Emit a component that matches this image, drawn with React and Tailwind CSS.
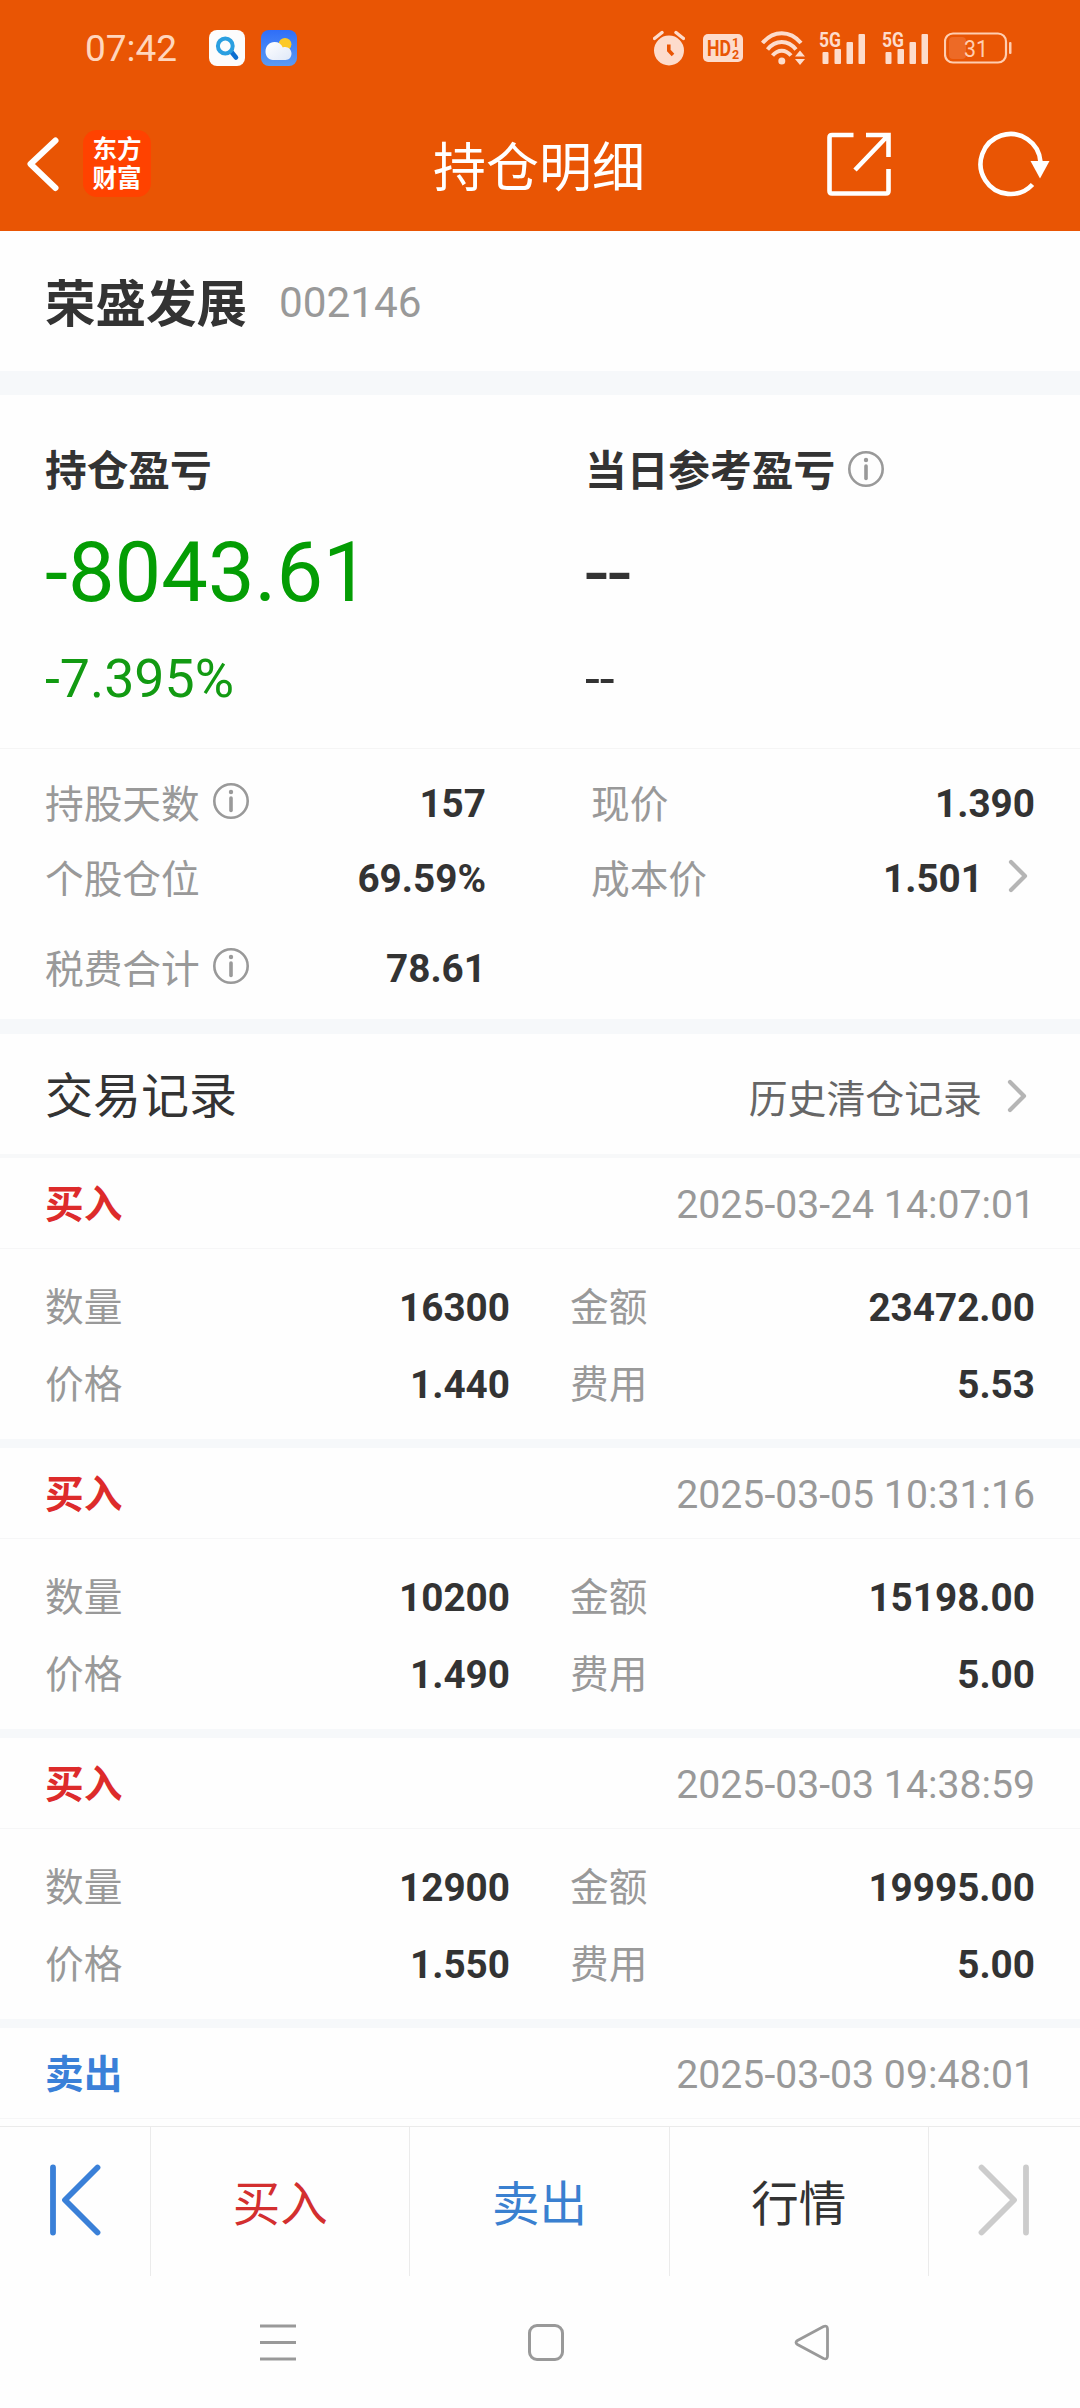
import React from "react";

const trades = [
  { side: "买入", time: "2025-03-24 14:07:01", count: "16300", amount: "23472.00", price: "1.440", fee: "5.53" },
  { side: "买入", time: "2025-03-05 10:31:16", count: "10200", amount: "15198.00", price: "1.490", fee: "5.00" },
  { side: "买入", time: "2025-03-03 14:38:59", count: "12900", amount: "19995.00", price: "1.550", fee: "5.00" },
  { side: "卖出", time: "2025-03-03 09:48:01" },
];

const InfoIcon = ({ className }) => (
  <svg className={className} width="36" height="36" viewBox="0 0 36 36" fill="none">
    <circle cx="18" cy="18" r="16.7" stroke="#999" strokeWidth="2.6" />
    <circle cx="18" cy="9" r="2.2" fill="#999" />
    <path d="M18 15V27.5" stroke="#999" strokeWidth="3.6" strokeLinecap="round" />
  </svg>
);

const Chevron = ({ className }) => (
  <svg className={className} width="20" height="34" viewBox="0 0 20 34" fill="none">
    <path d="M3 3L17 17L3 31" stroke="#b5b5b5" strokeWidth="4.2" strokeLinecap="round" strokeLinejoin="round" />
  </svg>
);

// Signal strength bars with the network type above them
const Signal = ({ className }) => (
  <svg className={className} width="46" height="46" viewBox="0 -6 46 46" fill="#fddccc">
    <text x="0" y="15.500" fontSize="21" fontWeight="700" fontFamily="Roboto, sans-serif" textLength="22" lengthAdjust="spacingAndGlyphs">5G</text>
    <rect x="3.5" y="21" width="6" height="12" rx="1" />
    <rect x="15.5" y="18" width="6.5" height="15" rx="1" />
    <rect x="27.5" y="11" width="6.5" height="22" rx="1" />
    <rect x="39.5" y="3" width="6.5" height="30" rx="1" />
  </svg>
);

const StatusBar = () => (
  <div className="flex h-[96px] items-center pl-[85px] pr-[68px]">
    <span className="w-[124px] pt-[1px] text-[37px] leading-[40px] text-[#ffd6bd]">07:42</span>
    <svg width="36" height="36" viewBox="0 0 36 36" fill="none">
      <rect width="36" height="36" rx="8" fill="#fcfcfc" />
      <path d="M22.5 22L27 27.5" stroke="#0d6fd0" strokeWidth="4.6" strokeLinecap="round" />
      <circle cx="16.3" cy="16" r="7.4" stroke="#2a9fe0" strokeWidth="4" />
    </svg>
    <svg className="ml-[16px]" width="36" height="36" viewBox="0 0 36 36">
      <defs>
        <linearGradient id="sky" x1="0" y1="0" x2="0" y2="1">
          <stop offset="0" stopColor="#2f6ef8" />
          <stop offset="1" stopColor="#5c9bf2" />
        </linearGradient>
        <linearGradient id="cloud" x1="0" y1="0" x2="1" y2="1">
          <stop offset="0" stopColor="#ffffff" />
          <stop offset="1" stopColor="#dfe8f8" />
        </linearGradient>
      </defs>
      <rect width="36" height="36" rx="8" fill="url(#sky)" />
      <circle cx="24" cy="14.3" r="6.4" fill="#fcc926" />
      <path d="M12 30C7.500 30 4.500 26 4.500 21.500C4.500 16 8.500 12 13.500 12C17.500 12 20.500 14 21.800 17.500C26 15.800 30.500 19 30.500 23.500C30.500 27.200 28 30 24.500 30Z" fill="url(#cloud)" />
    </svg>
    <div className="ml-auto flex items-center">
      <svg width="32" height="36" viewBox="0 0 32 36" fill="none">
        <circle cx="16" cy="20.500" r="15" fill="#fddccc" />
        <path d="M1.500 8.500L9 2.500M30.500 8.500L23 2.500" stroke="#fddccc" strokeWidth="3.400" strokeLinecap="round" />
        <path d="M15.800 14.500V20.500L20 25" stroke="#e95504" strokeWidth="3.600" />
      </svg>
      <svg className="ml-[18px]" width="40" height="28" viewBox="0 0 40 28">
        <rect width="40" height="28" rx="5" fill="#fddccc" />
        <g fill="#e95504" fontFamily="Roboto, sans-serif" fontWeight="700">
          <text x="4" y="22" fontSize="22.500" textLength="24" lengthAdjust="spacingAndGlyphs">HD</text>
          <text x="29" y="13" fontSize="12.500">1</text>
          <text x="29" y="25" fontSize="12.500">2</text>
        </g>
      </svg>
      <svg className="ml-[18px]" width="44" height="36" viewBox="0 0 44 36" fill="none">
        <path d="M1.500 13C12.500 0 29 0 40 13" stroke="#fddccc" strokeWidth="4" />
        <path d="M6.500 19.500C14.500 9.500 27 9.500 35 19.500" stroke="#fddccc" strokeWidth="4" />
        <path d="M11.500 25.500C17 19 24.500 19 30 25.500" stroke="#fddccc" strokeWidth="4" />
        <circle cx="20.800" cy="31" r="3.500" fill="#fddccc" />
        <path d="M34 26.500L39 20.500L44 26.500ZM34 29L39 35L44 29Z" fill="#fddccc" />
      </svg>
      <Signal className="ml-[14px]" />
      <Signal className="ml-[17px]" />
      <svg className="ml-[16px]" width="68" height="32" viewBox="0 0 68 32">
        <rect x="1" y="1.500" width="61" height="29" rx="8" fill="none" stroke="#ffcdb0" strokeWidth="2.200" />
        <rect x="5" y="5" width="17" height="22" rx="4" fill="#ed6a26" />
        <rect x="65" y="10" width="2.500" height="12" rx="1" fill="#ffcdb0" />
        <text x="20" y="24.500" fontSize="24" fontFamily="Roboto, sans-serif" fill="#ffcdb0" textLength="24" lengthAdjust="spacingAndGlyphs">31</text>
      </svg>
    </div>
  </div>
);

const TitleBar = () => (
  <div className="relative flex h-[135px] items-center pl-[25px] pr-[30px]">
    <svg width="35" height="58" viewBox="0 0 35 58" fill="none">
      <path d="M30.500 5.500L5.500 29L30.500 53" stroke="white" strokeWidth="6" strokeLinecap="round" strokeLinejoin="round" />
    </svg>
    <div className="ml-[23px] flex h-[67px] w-[68px] flex-col items-center justify-center rounded-[14px] bg-[#ff4200] text-[24.500px] font-bold leading-[29px] text-white">
      <span>东方</span>
      <span>财富</span>
    </div>
    <h1 className="absolute inset-x-0 top-[41px] pr-[2px] text-center text-[53px] leading-[64px] text-white">持仓明细</h1>
    <svg className="ml-auto" width="64" height="64" viewBox="0 0 64 64" fill="none" stroke="white" strokeWidth="4.600">
      <path d="M26.500 3H5Q2.500 3 2.500 5.500V59Q2.500 61.500 5 61.500H59Q61.500 61.500 61.500 59V37" />
      <path d="M39 3H61.500V25M61 3.500L28 38" />
    </svg>
    <svg className="ml-[87px]" width="72" height="66" viewBox="0 0 72 66" fill="none">
      <path d="M54.500 53.500A30 30 0 1 1 62.500 31" stroke="white" strokeWidth="4.600" />
      <path d="M52.500 30H71.500L62 47.500Z" fill="white" />
    </svg>
  </div>
);

const Profit = () => (
  <section className="flex h-[353px] pl-[45px] pt-[46px]">
    <div className="w-[540px]">
      <h2 className="pt-[1px] text-[41.700px] font-bold leading-[59px]">持仓盈亏</h2>
      <p className="mt-[21px] text-[83px] leading-[102px] text-[#049d04]">-8043.61</p>
      <p className="mt-[25px] text-[53.700px] leading-[60px] text-[#129a12]">-7.395%</p>
    </div>
    <div>
      <h2 className="flex items-center pt-[1px] text-[41.700px] font-bold leading-[59px]">
        当日参考盈亏
        <InfoIcon className="mb-[5px] ml-[13px]" />
      </h2>
      <p className="mt-[21px] text-[83px] leading-[102px]">--</p>
      <p className="mt-[25px] text-[53.700px] leading-[60px]">--</p>
    </div>
  </section>
);

const Stat = ({ label, value, info, arrow }) => (
  <div className="flex h-[75px] items-center">
    <span className="pt-[2px] text-[#999]">{label}</span>
    {info && <InfoIcon className="mb-[5px] ml-[13px]" />}
    <span className="ml-auto font-bold">{value}</span>
    {arrow && <Chevron className="mb-[5px] ml-[25px] mr-[7px]" />}
  </div>
);

const Stats = () => (
  <section className="flex h-[271px] border-t border-[#f5f5f5] pl-[45px] pr-[45px] pt-[17px] text-[38.700px] leading-[56px]">
    <div className="w-[441px]">
      <Stat label="持股天数" value="157" info />
      <Stat label="个股仓位" value="69.59%" />
      <div className="mt-[15px]">
        <Stat label="税费合计" value="78.61" info />
      </div>
    </div>
    <div className="ml-[105px] flex-1">
      <Stat label="现价" value="1.390" />
      <Stat label="成本价" value="1.501" arrow />
    </div>
  </section>
);

const Trade = ({ trade }) => (
  <li className="border-b-[9px] border-[#f6f8fa] text-[38.700px] leading-[56px] last:border-b-0">
    <div className="flex h-[91px] items-center justify-between border-b border-[#f6f6f7] px-[45px] pt-[3px]">
      <span className={trade.side === "买入" ? "font-bold text-[#dd2b2b]" : "font-bold text-[#3a80d8]"}>
        {trade.side}
      </span>
      <span className="text-[39.200px] text-[#999]">{trade.time}</span>
    </div>
    {trade.count && (
      <div className="flex h-[190px] pl-[45px] pr-[45px] pt-[20px] leading-[77px]">
        <div className="w-[465px]">
          <p className="flex justify-between"><span className="text-[#999]">数量</span><b>{trade.count}</b></p>
          <p className="flex justify-between"><span className="text-[#999]">价格</span><b>{trade.price}</b></p>
        </div>
        <div className="ml-[60px] flex-1">
          <p className="flex justify-between"><span className="text-[#999]">金额</span><b>{trade.amount}</b></p>
          <p className="flex justify-between"><span className="text-[#999]">费用</span><b>{trade.fee}</b></p>
        </div>
      </div>
    )}
  </li>
);

const ActionBar = () => (
  <div className="flex h-[150px] shrink-0 divide-x divide-[#ebebeb] border-t border-[#ebebeb] text-center text-[47.500px] leading-[156px]">
    <div className="flex w-[151px] items-center pb-[3px] pl-[49px]">
      <svg width="52" height="74" viewBox="0 0 52 74" fill="none" stroke="#3a80d8" strokeWidth="5.800" strokeLinecap="round" strokeLinejoin="round">
        <path d="M4 4.500V69.500M48.500 4.500L16 37L48.500 69.500" />
      </svg>
    </div>
    <button className="flex-1 text-[#d32f2f]">买入</button>
    <button className="flex-1 text-[#3a80d0]">卖出</button>
    <button className="flex-1">行情</button>
    <div className="flex w-[151px] items-center pb-[3px] pl-[49px]">
      <svg width="52" height="74" viewBox="0 0 52 74" fill="none" stroke="#ccc" strokeWidth="5.800" strokeLinecap="round" strokeLinejoin="round">
        <path d="M48 4.500V69.500M3.500 4.500L36 37L3.500 69.500" />
      </svg>
    </div>
  </div>
);

// Android system navigation
const NavBar = () => (
  <div className="flex h-[132px] shrink-0 items-center pl-[260px]">
    <svg width="36" height="37" viewBox="0 0 36 37" stroke="#999" strokeWidth="3">
      <path d="M0 2H36M0 18.500H36M0 35H36" />
    </svg>
    <div className="ml-[232px] h-[37px] w-[36px] rounded-[9px] border-[3px] border-[#999]" />
    <svg className="ml-[230px]" width="36" height="37" viewBox="0 0 36 37" fill="none" stroke="#999" strokeWidth="2.800">
      <path d="M3.500 16.500L29.500 2.500Q33.500 1 33.500 5V32Q33.500 36 29.500 34.500L3.500 20.500Q0.500 18.500 3.500 16.500Z" />
    </svg>
  </div>
);

const App = () => {
  return (
    <div className="flex h-[2408px] w-[1080px] flex-col overflow-hidden bg-[#fefefe] font-[Roboto,'Noto_Sans_CJK_SC',sans-serif] text-[#333]">
      <header className="h-[231px] shrink-0 bg-[#e95504]">
        <StatusBar />
        <TitleBar />
      </header>

      <main className="min-h-0 flex-1 overflow-hidden">
        {/* Stock name and code */}
        <div className="flex h-[140px] items-center pl-[45px]">
          <span className="pt-[7px] text-[50.500px] font-bold leading-[60px]">荣盛发展</span>
          <span className="ml-[32px] pt-[3px] text-[42.300px] leading-[60px] text-[#999]">002146</span>
        </div>
        <div className="h-[24px] bg-[#f6f8fa]" />

        <Profit />
        <Stats />
        <div className="h-[15px] bg-[#f6f8fa]" />

        {/* Trade records */}
        <div className="flex h-[120px] items-center pl-[45px] pr-[53px]">
          <span className="pt-[5px] text-[48px] leading-[60px]">交易记录</span>
          <span className="ml-auto pt-[11px] text-[38.900px] leading-[60px] text-[#666]">历史清仓记录</span>
          <Chevron className="ml-[25px] mt-[4px]" />
        </div>
        <div className="h-[4px] bg-[#f7f8f9]" />
        <ul>
          {trades.map((trade) => (
            <Trade key={trade.time} trade={trade} />
          ))}
        </ul>
      </main>

      <ActionBar />
      <NavBar />
    </div>
  );
};

export default App;
